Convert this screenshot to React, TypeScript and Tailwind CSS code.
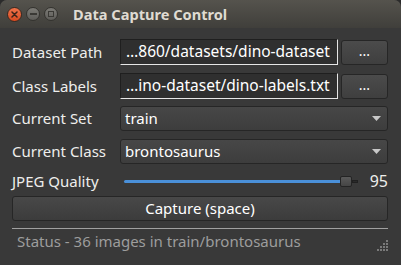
import React from 'react';

const font = { fontFamily: '"Noto Sans", "Open Sans", sans-serif' };

const TitleButton: React.FC<{ kind: 'close' | 'min' | 'max' }> = ({ kind }) => {
  if (kind === 'close') {
    return (
      <div className="w-[15px] h-[15px] rounded-full bg-gradient-to-b from-[#f0734a] to-[#d84a1f] border border-[#3a2a22] flex items-center justify-center">
        <svg width="7" height="7" viewBox="0 0 7 7">
          <path d="M1 1L6 6M6 1L1 6" stroke="#3b2319" strokeWidth="1.5" strokeLinecap="round" />
        </svg>
      </div>
    );
  }
  return (
    <div className="w-[14px] h-[14px] rounded-full bg-gradient-to-b from-[#7c7b76] to-[#5e5d59] border border-[#34332f] flex items-center justify-center">
      {kind === 'min' ? (
        <div className="w-[7px] h-[2px] bg-[#3a3935]" />
      ) : (
        <div className="w-[6px] h-[6px] border border-[#3a3935]" />
      )}
    </div>
  );
};

const PathRow: React.FC<{ label: string; value: string }> = ({ label, value }) => (
  <div className="flex items-center h-[26px]">
    <div className="w-[108px] text-[15px] text-[#eeeeec]">{label}</div>
    <div className="w-[218px] h-[26px] bg-[#2f2f2f] border-t border-l border-[#1f1f1f] border-b border-r border-b-[#e6e6e6] border-r-[#e6e6e6] flex items-center pl-[5px] text-[15.5px] text-white whitespace-nowrap overflow-hidden">
      {value}
    </div>
    <div className="ml-[3px] flex-1 h-[25px] rounded-[3px] bg-gradient-to-b from-[#4b4b4b] to-[#3f3f3f] border border-[#262626] flex items-center justify-center text-[14px] text-white leading-none pb-[2px]">
      ...
    </div>
  </div>
);

const ComboRow: React.FC<{ label: string; value: string }> = ({ label, value }) => (
  <div className="flex items-center h-[25px]">
    <div className="w-[108px] text-[15px] text-[#eeeeec]">{label}</div>
    <div className="flex-1 h-[25px] rounded-[3px] bg-gradient-to-b from-[#474747] to-[#3d3d3d] border border-[#262626] flex items-center pl-[4px] pr-[6px] text-[15px] text-white">
      <span className="flex-1">{value}</span>
      <svg width="9" height="5" viewBox="0 0 9 5">
        <path d="M0 0H9L4.5 5Z" fill="#c8c8c8" />
      </svg>
    </div>
  </div>
);

export default function App() {
  return (
    <div className="w-[401px] h-[265px] bg-[#2b2b2b] overflow-hidden" style={font}>
      <div className="w-full h-full flex flex-col rounded-t-[7px] overflow-hidden bg-[#393939]">
        <div className="h-[28px] shrink-0 bg-gradient-to-b from-[#55534d] to-[#403f3b] flex items-center pl-[7px]">
          <div className="flex items-center gap-[4px]">
            <TitleButton kind="close" />
            <TitleButton kind="min" />
            <TitleButton kind="max" />
          </div>
          <div className="ml-[15px] text-[14.6px] font-bold text-[#dfdbd2] pt-[1px]">Data Capture Control</div>
        </div>

        <div className="flex-1 flex flex-col pl-[12px] pr-[13px] pt-[11px]">
          <div className="flex flex-col">
            <PathRow label="Dataset Path" value="…860/datasets/dino-dataset" />
            <div className="mt-[8px]">
              <PathRow label="Class Labels" value="…ino-dataset/dino-labels.txt" />
            </div>
            <div className="mt-[7px]">
              <ComboRow label="Current Set" value="train" />
            </div>
            <div className="mt-[8px]">
              <ComboRow label="Current Class" value="brontosaurus" />
            </div>
          </div>

          <div className="flex items-center h-[22px] mt-[6px]">
            <div className="w-[108px] text-[15px] text-[#eeeeec]">JPEG Quality</div>
            <div className="flex-1 flex items-center pl-[4px] pr-[6px]">
              <div className="h-[3px] w-[216px] bg-[#4a90d9] rounded-l-sm" />
              <div className="w-[12px] h-[11px] rounded-[2px] bg-gradient-to-b from-[#5a5a5a] to-[#454545] border border-[#242424]" />
              <div className="flex-1 h-[3px] bg-[#2a2a2a] border border-[#202020]" />
            </div>
            <div className="w-[24px] text-right text-[16px] text-[#eeeeec]">95</div>
          </div>

          <div className="mt-[4px] h-[25px] rounded-[3px] bg-gradient-to-b from-[#484848] to-[#3c3c3c] border border-[#262626] flex items-center justify-center text-[15px] text-white">
            Capture (space)
          </div>

          <div className="mt-[7px] h-px bg-[#a0a0a0]" />

          <div className="flex items-center mt-[2px] h-[20px]">
            <div className="flex-1 pl-[5px] text-[15px] text-[#9d9d9d]">Status - 36 images in train/brontosaurus</div>
            <svg width="11" height="11" viewBox="0 0 11 11" className="mt-[8px]">
              {[[9, 1], [9, 4], [6, 4], [9, 7], [6, 7], [3, 7], [9, 10], [6, 10], [3, 10], [0, 10]].map(([x, y], i) => (
                <rect key={i} x={x} y={y - 1} width="2" height="2" fill="#7a7a7a" />
              ))}
            </svg>
          </div>
        </div>
      </div>
    </div>
  );
}
